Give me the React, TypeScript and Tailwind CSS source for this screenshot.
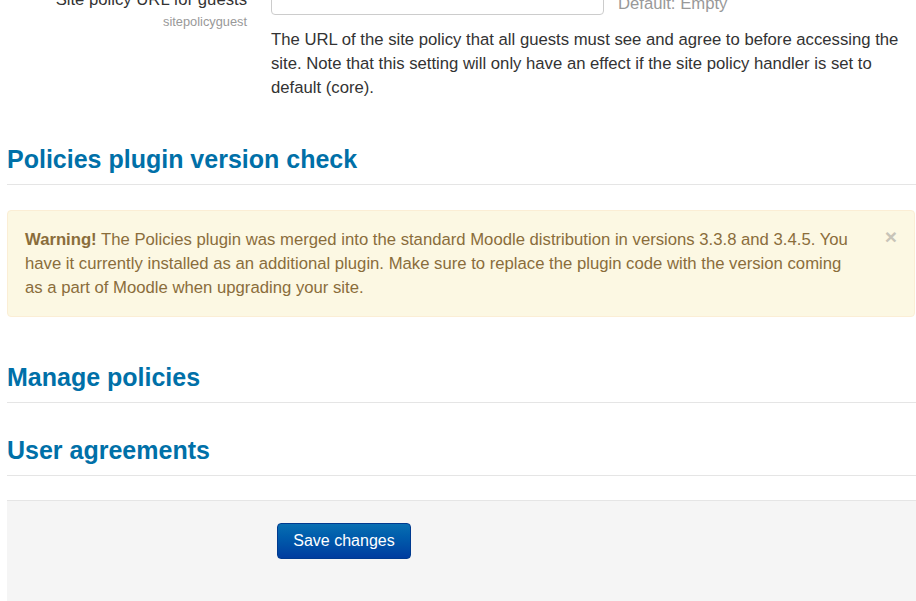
import React from "react";

export default function App() {
  return (
    <div className="h-[601px] w-[916px] overflow-hidden bg-white font-['Liberation_Sans',Arial,sans-serif] text-[16.7px] text-[#333]">
      <div className="pl-[7px]">
        {/* setting row (scrolled partly off the top) */}
        <div className="-mt-[15px] flex">
          <div className="flex w-[240px] shrink-0 flex-col items-end">
            <div className="pt-[3px] leading-[24px] text-[#333]">Site policy URL for guests</div>
            <div className="mt-[2px] text-[12.8px] leading-[16px] text-[#999]">sitepolicyguest</div>
          </div>
          <div className="ml-[24px] flex-1">
            <div className="flex h-[30px] items-start">
              <div className="h-[30px] w-[333px] rounded-[4px] border border-[#ccc] bg-white"></div>
              <div className="ml-[14px] h-[30px] pt-[8px] leading-[22px] text-[#999]">Default: Empty</div>
            </div>
            <p className="mt-[13px] pr-[4px] leading-[24px] text-[#333]">
              The URL of the site policy that all guests must see and agree to before accessing the site. Note that this setting will only have an effect if the site policy handler is set to default (core).
            </p>
          </div>
        </div>

        {/* Policies plugin version check */}
        <h3 className="mt-[39px] border-b border-[#e5e5e5] pb-[5px] text-[25px] font-bold leading-[40px] text-[#0070a8]">
          Policies plugin version check
        </h3>
        <div className="relative mr-[1px] mt-[25px] rounded-[4px] border border-[#fbeed5] bg-[#fcf8e3] pb-[16px] pl-[17px] pr-[62px] pt-[17px] leading-[24px] text-[#8a6d3b]">
          <strong className="font-bold">Warning!</strong> The Policies plugin was merged into the standard Moodle distribution in versions 3.3.8 and 3.4.5. You have it currently installed as an additional plugin. Make sure to replace the plugin code with the version coming as a part of Moodle when upgrading your site.
          <span className="absolute right-[17px] top-[14px] text-[21px] font-bold leading-[24px] text-[#c8c4b8]">×</span>
        </div>

        <h3 className="mt-[40px] border-b border-[#e5e5e5] pb-[5px] text-[25px] font-bold leading-[40px] text-[#0070a8]">
          Manage policies
        </h3>
        <h3 className="mt-[27px] border-b border-[#e5e5e5] pb-[5px] text-[25px] font-bold leading-[40px] text-[#0070a8]">
          User agreements
        </h3>

        <div className="mt-[24px] h-[200px] border-t border-[#e5e5e5] bg-[#f5f5f5] pl-[270px] pt-[22px]">
          <button className="h-[36px] w-[134px] rounded-[4px] border border-[#003a8f] bg-gradient-to-b from-[#0a6fb2] to-[#003c9f] text-[16px] leading-[20px] text-white">
            Save changes
          </button>
        </div>
      </div>
    </div>
  );
}
